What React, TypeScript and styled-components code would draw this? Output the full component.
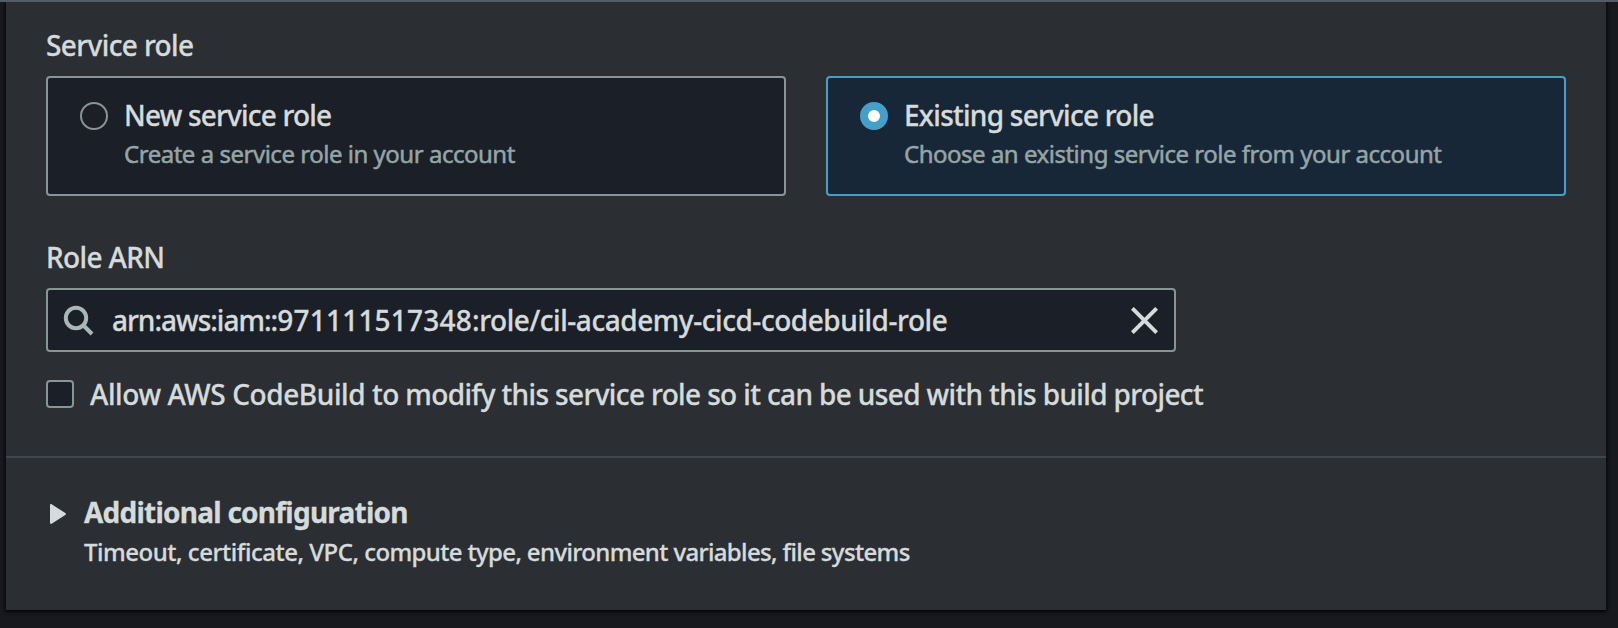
import React, { useState } from 'react';
import styled, { createGlobalStyle } from 'styled-components';

const GlobalStyle = createGlobalStyle`
  *, *::before, *::after { box-sizing: border-box; }
  body {
    margin: 0;
    background: #17191e;
    color: #d5dbdb;
    font-family: "Noto Sans", "Open Sans", sans-serif;
    font-weight: 500;
    font-size: 28px;
    line-height: 44px;
    overflow: hidden;
  }
`;

const Page = styled.main`
  height: 628px;
  padding: 0 12px 18px 6px;
  border-top: 2px solid #545b64;
  overflow: hidden;
`;

const Panel = styled.section`
  display: flex;
  flex-direction: column;
  height: 608px;
  background: #2b2e33;
  box-shadow: 0 2px 3px rgba(0, 0, 0, 0.65), 0 0 3px 1px rgba(0, 0, 0, 0.55);
`;

const Fields = styled.div`
  height: 456px;
  padding: 21px 40px 0;
  border-bottom: 2px solid #414750;
`;

const Text = styled.div<{ $spacing: number }>`
  letter-spacing: ${p => p.$spacing}px;
  white-space: nowrap;
  -webkit-text-stroke: 0.3px currentColor;
`;

const Run = styled.span<{ $spacing: number }>`
  letter-spacing: ${p => p.$spacing}px;
`;

const FieldLabel = styled(Text)`
  margin-bottom: 9px;
`;

const Tiles = styled.div`
  display: grid;
  grid-template-columns: 1fr 1fr;
  gap: 40px;
  margin-bottom: 39px;
`;

const Tile = styled.div<{ $selected: boolean }>`
  display: flex;
  gap: 16px;
  height: 120px;
  padding: 15px 32px 0;
  border: 2px solid ${p => (p.$selected ? '#44a0c8' : '#879596')};
  border-radius: 4px;
  background: ${p => (p.$selected ? '#182737' : '#1b1f28')};
  cursor: pointer;
`;

const Radio = styled.span<{ $selected: boolean }>`
  flex: none;
  width: 28px;
  height: 28px;
  margin-top: 9px;
  border: ${p => (p.$selected ? '8px solid #44a0c8' : '2px solid #879596')};
  border-radius: 50%;
  background: ${p => (p.$selected ? '#fff' : '#1b1f28')};
`;

const TileDescription = styled(Text)`
  color: #95a5a6;
  font-size: 24px;
  font-weight: 400;
  line-height: 34px;
  -webkit-text-stroke: 0.5px #95a5a6;
`;

const SearchField = styled.div`
  display: flex;
  align-items: center;
  width: 1130px;
  height: 64px;
  margin-bottom: 20px;
  padding: 0 16px 0 14px;
  border: 2px solid #879596;
  border-radius: 4px;
  background: #1b1f28;
`;

const SearchIcon = styled.svg`
  flex: none;
  width: 32px;
  height: 32px;
  margin-right: 18px;
`;

const CloseIcon = styled.svg`
  flex: none;
  width: 27px;
  height: 27px;
  margin-left: auto;
`;

const CheckRow = styled.label`
  display: flex;
  align-items: center;
  gap: 16px;
`;

const Checkbox = styled.span`
  flex: none;
  width: 28px;
  height: 28px;
  border: 2px solid #879596;
  border-radius: 4px;
  background: #1b1f28;
`;

const Expander = styled.div`
  display: flex;
  padding: 32px 40px 0 44px;
`;

const Caret = styled.svg`
  flex: none;
  width: 16px;
  height: 20px;
  margin: 14px 18px 0 0;
`;

const ExpanderTitle = styled(Text)`
  font-weight: 700;
`;

const ExpanderDescription = styled(Text)`
  font-size: 24px;
  line-height: 35px;
`;

const roles = [
  { title: 'New service role', titleSpacing: -0.8, text: 'Create a service role in your account', textSpacing: -0.48 },
  { title: 'Existing service role', titleSpacing: -0.74, text: 'Choose an existing service role from your account', textSpacing: -0.49 },
];

export default function App() {
  const [selected, setSelected] = useState(1);
  return (
    <>
      <GlobalStyle />
      <Page>
        <Panel>
          <Fields>
            <FieldLabel $spacing={-0.6}>Service role</FieldLabel>
            <Tiles>
              {roles.map((role, i) => (
                <Tile key={role.title} $selected={i === selected} onClick={() => setSelected(i)}>
                  <Radio $selected={i === selected} />
                  <div>
                    <Text $spacing={role.titleSpacing}>{role.title}</Text>
                    <TileDescription $spacing={role.textSpacing}>{role.text}</TileDescription>
                  </div>
                </Tile>
              ))}
            </Tiles>
            <FieldLabel $spacing={-0.65}>Role ARN</FieldLabel>
            <SearchField>
              <SearchIcon viewBox="0 0 32 32" fill="none" stroke="#aab7b8" strokeWidth="4">
                <circle cx="14" cy="14" r="10.2" />
                <path d="M21 21 30 30" />
              </SearchIcon>
              <Text $spacing={-0.45}>
                <Run $spacing={-1}>arn:aws:iam::</Run>
                <Run $spacing={0.22}>971111517348</Run>
                :role/cil-academy-cicd-codebuild-role
              </Text>
              <CloseIcon viewBox="0 0 26 26" stroke="#d5dbdb" strokeWidth="3.8">
                <path d="M1.3 1.3 24.7 24.7M24.7 1.3 1.3 24.7" />
              </CloseIcon>
            </SearchField>
            <CheckRow>
              <Checkbox />
              <Text $spacing={-0.63}>
                <Run $spacing={-0.4}>Allow AWS CodeBuild </Run>
                to modify this service role so it can be used with this build project
              </Text>
            </CheckRow>
          </Fields>
          <Expander>
            <Caret viewBox="0 0 16 20" fill="#d5dbdb">
              <path d="M0 1.4C0 .2 1 -.3 2 .4L15.3 9.1C16.2 9.7 16.2 10.3 15.3 10.9L2 19.6C1 20.3 0 19.8 0 18.6Z" />
            </Caret>
            <div>
              <ExpanderTitle $spacing={-0.76}>Additional configuration</ExpanderTitle>
              <ExpanderDescription $spacing={-0.59}>
                <Run $spacing={-0.48}>Timeout, certificate, VPC, </Run>
                <Run $spacing={-0.65}>compute type, environment variables, file systems</Run>
              </ExpanderDescription>
            </div>
          </Expander>
        </Panel>
      </Page>
    </>
  );
}
